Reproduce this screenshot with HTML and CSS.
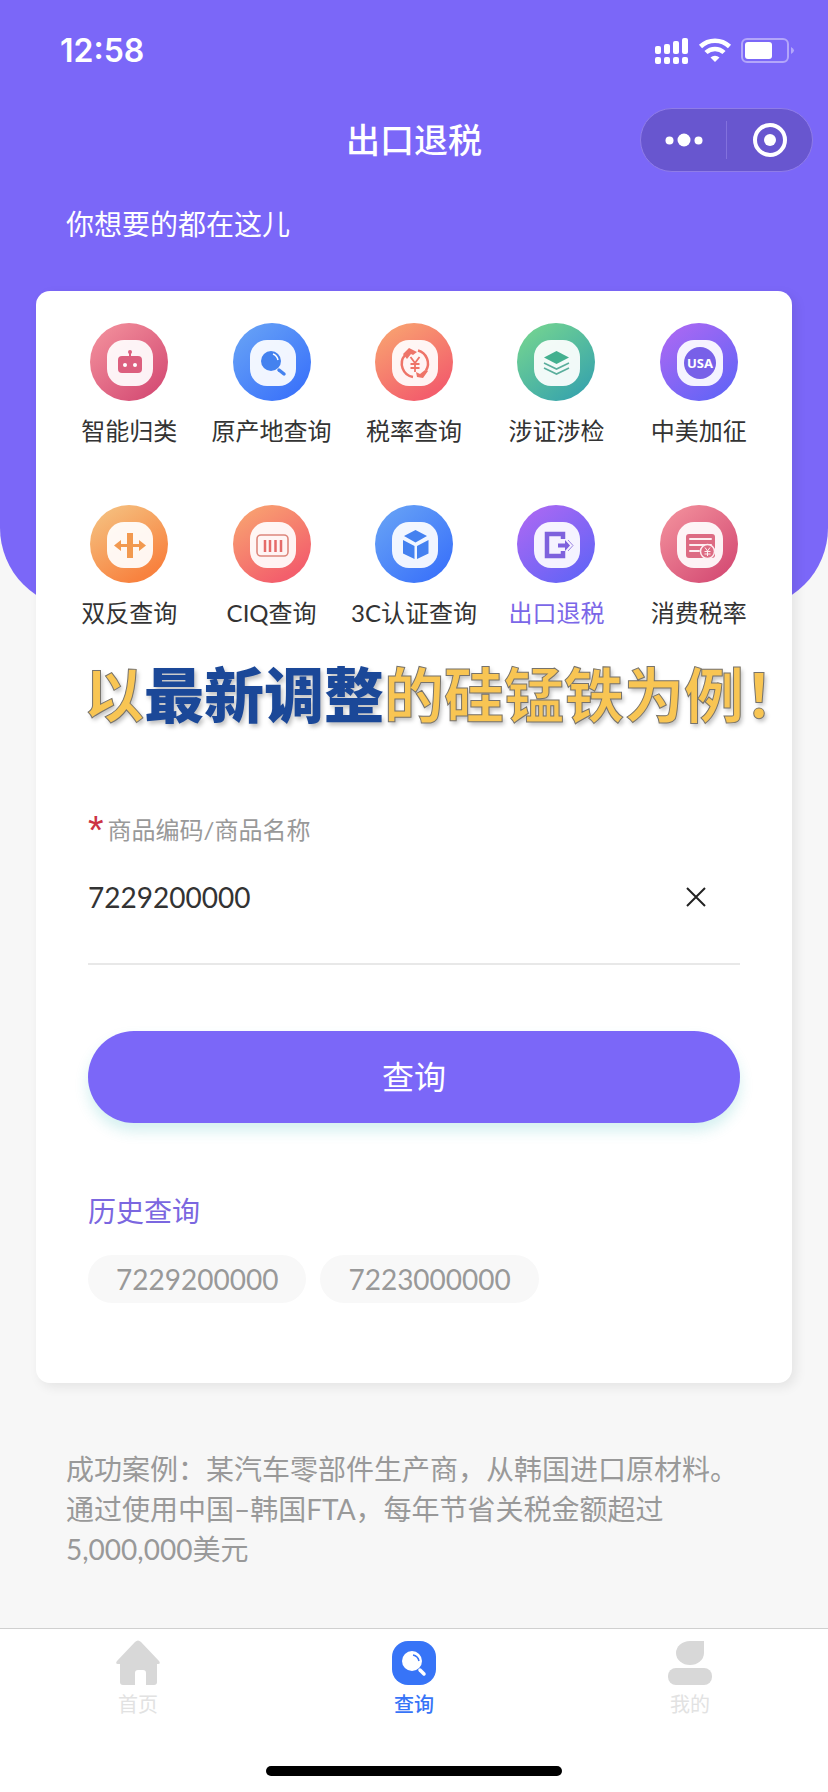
FILE: index.html
```html
<!doctype html>
<html lang="zh-CN">
<head>
	<meta charset="UTF-8">
	<meta name="viewport" content="width=device-width, initial-scale=1">
	<title>出口退税</title>
	<link rel="stylesheet" href="styles.css">
</head>
<body>
<!-- 公用渐变色 -->
<svg class="defs" width="0" height="0" aria-hidden="true">
	<defs>
		<linearGradient id="pink" x1="0.1" y1="0.1" x2="0.8" y2="0.9"><stop offset="0" stop-color="#f18d9a"/><stop offset="1" stop-color="#d64f76"/></linearGradient>
		<linearGradient id="blue" x1="0.1" y1="0.1" x2="0.8" y2="0.9"><stop offset="0" stop-color="#65a0f6"/><stop offset="1" stop-color="#3c74fa"/></linearGradient>
		<linearGradient id="red" x1="0.2" y1="0.1" x2="0.7" y2="0.9"><stop offset="0" stop-color="#f89d70"/><stop offset="1" stop-color="#f35f6c"/></linearGradient>
		<linearGradient id="green" x1="0.2" y1="0.1" x2="0.8" y2="0.9"><stop offset="0" stop-color="#6fd093"/><stop offset="1" stop-color="#3aa6ab"/></linearGradient>
		<linearGradient id="violet" x1="0.2" y1="0.1" x2="0.8" y2="0.9"><stop offset="0" stop-color="#a568f3"/><stop offset="1" stop-color="#6664f6"/></linearGradient>
		<linearGradient id="orange" x1="0.2" y1="0.1" x2="0.7" y2="0.9"><stop offset="0" stop-color="#f5bb7a"/><stop offset="1" stop-color="#f8823f"/></linearGradient>
	</defs>
</svg>

<div class="page">
	<header class="hero">
		<div class="status">
			<span class="time">12:58</span>
			<svg width="142" height="28" viewBox="0 0 142 28" fill="#fff" aria-hidden="true">
				<rect x="1" y="10" width="6" height="8" rx="2"/><rect x="10" y="8" width="6" height="10" rx="2"/><rect x="19" y="5" width="6" height="13" rx="2"/><rect x="28" y="2" width="6" height="16" rx="2"/>
				<rect x="1" y="21" width="6" height="7" rx="2"/><rect x="10" y="21" width="6" height="7" rx="2"/><rect x="19" y="21" width="6" height="7" rx="2"/><rect x="28" y="21" width="6" height="7" rx="2"/>
				<g fill="none" stroke="#fff" stroke-width="4.5"><path d="M46.500 10.500a21 21 0 0 1 29 0"/><path d="M52 16.500a13 13 0 0 1 18 0"/></g>
				<path d="M56.500 21.500a7 7 0 0 1 9 0L61 26z"/>
				<rect x="88" y="3" width="46" height="23" rx="5" fill="none" stroke="#b3a6fa" stroke-width="2"/>
				<rect x="91" y="6" width="27" height="17" rx="3"/>
				<path d="M137 11q6 3.500 0 7z" fill="#b3a6fa"/>
			</svg>
		</div>
		<div class="nav">
			<h1>出口退税</h1>
			<div class="capsule">
				<button type="button" aria-label="更多">
					<svg width="40" height="16" viewBox="0 0 40 16" fill="#fff"><circle cx="5.500" cy="8.500" r="4"/><circle cx="20" cy="8" r="6.500"/><circle cx="34.500" cy="8.500" r="4"/></svg>
				</button>
				<button type="button" aria-label="关闭">
					<svg width="36" height="36" viewBox="0 0 36 36" fill="#fff"><circle cx="18" cy="18" r="15" fill="none" stroke="#fff" stroke-width="4"/><circle cx="18" cy="18" r="6"/></svg>
				</button>
			</div>
		</div>
		<p class="slogan">你想要的都在这儿</p>
	</header>

	<main class="card">
		<nav class="menu">
			<a href="#">
				<svg viewBox="0 0 78 78"><circle cx="39" cy="39" r="39" fill="url(#pink)"/><rect class="tile" x="17" y="17" width="46" height="46" rx="17"/>
					<g fill="#dc5f7e"><rect x="28" y="33" width="24" height="17" rx="4"/><rect x="39" y="28" width="2" height="6"/><circle cx="40" cy="29" r="2"/></g><circle cx="35" cy="42" r="2" fill="#fff"/><circle cx="45" cy="42" r="2" fill="#fff"/></svg>
				<span>智能归类</span>
			</a>
			<a href="#">
				<svg viewBox="0 0 78 78"><circle cx="39" cy="39" r="39" fill="url(#blue)"/><rect class="tile" x="17" y="17" width="46" height="46" rx="17"/>
					<circle cx="38" cy="38" r="10" fill="#4482ef"/><path d="M40 31q4 1.500 5 6" fill="none" stroke="#fff" stroke-width="1.500"/><path d="M46 47l5 4" stroke="#4482ef" stroke-width="3.500" stroke-linecap="round"/></svg>
				<span>原产地查询</span>
			</a>
			<a href="#">
				<svg viewBox="0 0 78 78"><circle cx="39" cy="39" r="39" fill="url(#red)"/><rect class="tile" x="17" y="17" width="46" height="46" rx="17"/>
					<g fill="none" stroke="#ee7468" stroke-width="2.500"><path d="M38 54A13.500 13.500 0 0 1 30 32"/><path d="M43 27.500a13.500 13.500 0 0 1 8 20"/></g>
					<path d="M28 31l6-6 8 4-4 3-2-1-4 5zM41 49l4 2 5-4 3 1-5 7-6-1z" fill="#ee7468"/>
					<path d="M35.500 34l4.500 6 4.500-6M40 40v9M35.500 41h9M35.500 45h9" fill="none" stroke="#ee7468" stroke-width="1.800"/></svg>
				<span>税率查询</span>
			</a>
			<a href="#">
				<svg viewBox="0 0 78 78"><circle cx="39" cy="39" r="39" fill="url(#green)"/><rect class="tile" x="17" y="17" width="46" height="46" rx="17"/>
					<path d="M39.500 28L52 34.500 39.500 41 27 34.500z" fill="#43b08f"/><path d="M27 40l12.500 6L52 40M27 45l12.500 6L52 45" fill="none" stroke="#5aae9c" stroke-width="1.600"/></svg>
				<span>涉证涉检</span>
			</a>
			<a href="#">
				<svg viewBox="0 0 78 78"><circle cx="39" cy="39" r="39" fill="url(#violet)"/><rect class="tile" x="17" y="17" width="46" height="46" rx="17"/>
					<circle cx="40" cy="40" r="16" fill="#7860e8"/><text class="usa" x="40" y="45" text-anchor="middle">USA</text></svg>
				<span>中美加征</span>
			</a>
			<a href="#">
				<svg viewBox="0 0 78 78"><circle cx="39" cy="39" r="39" fill="url(#orange)"/><rect class="tile" x="17" y="17" width="46" height="46" rx="17"/>
					<path d="M37 28h6v11h6v-4l7 5.500-7 5.500v-4h-6v11h-6V42h-6v4l-7-5.500 7-5.500v4h6z" fill="#f2994f"/></svg>
				<span>双反查询</span>
			</a>
			<a href="#">
				<svg viewBox="0 0 78 78"><circle cx="39" cy="39" r="39" fill="url(#red)"/><rect class="tile" x="17" y="17" width="46" height="46" rx="17"/>
					<rect x="24" y="30" width="31" height="21" rx="4" fill="none" stroke="#dd877c" stroke-width="1.600"/><path d="M32 35v12M37 35v12M42.500 35v12M48 35v12" stroke="#e56b69" stroke-width="2.500"/></svg>
				<span>CIQ查询</span>
			</a>
			<a href="#">
				<svg viewBox="0 0 78 78"><circle cx="39" cy="39" r="39" fill="url(#blue)"/><rect class="tile" x="17" y="17" width="46" height="46" rx="17"/>
					<path d="M40.500 25L52 31l-11.500 6.500L29 31zM28 35l11.500 6v13L28 48.500zM53.500 35L42 41v13l11.500-5.500z" fill="#4481f0"/></svg>
				<span>3C认证查询</span>
			</a>
			<a href="#" class="active">
				<svg viewBox="0 0 78 78"><circle cx="39" cy="39" r="39" fill="url(#violet)"/><rect class="tile" x="17" y="17" width="46" height="46" rx="17"/>
					<path d="M46 34v-5H30v22h16v-5" fill="none" stroke="#7e62dd" stroke-width="4.500"/><path d="M41 38.500h7V35l5 5.500-5 5.500v-3.500h-7z" fill="#7e62dd"/><path d="M51 35l5 5.500-5 5.500" fill="none" stroke="#9a83e2" stroke-width="1"/></svg>
				<span>出口退税</span>
			</a>
			<a href="#">
				<svg viewBox="0 0 78 78"><circle cx="39" cy="39" r="39" fill="url(#pink)"/><rect class="tile" x="17" y="17" width="46" height="46" rx="17"/>
					<rect x="26" y="29" width="29" height="24" rx="3" fill="#dd6b83"/><path d="M30 34h21M30 40h21M30 46h9" stroke="#fdeef1" stroke-width="2" stroke-linecap="round"/>
					<circle cx="47.500" cy="46.500" r="7" fill="#dd6b83" stroke="#fdeef1" stroke-width="1.500"/><path d="M45 42.500l2.500 3.500 2.500-3.500M47.500 46v5M44.500 46.500h6M44.500 49h6" fill="none" stroke="#fdeef1"/></svg>
				<span>消费税率</span>
			</a>
		</nav>

		<p class="banner">以<b>最新调整</b>的硅锰铁为例！</p>

		<form class="query">
			<label for="code"><em>*</em>商品编码/商品名称</label>
			<div class="field">
				<input type="text" id="code" name="code" value="7229200000">
				<button type="reset" class="clear" aria-label="清空">
					<svg width="20" height="20" viewBox="0 0 20 20"><path d="M1 1l18 18M19 1L1 19" stroke="#222" stroke-width="2"/></svg>
				</button>
			</div>
			<button type="submit" class="submit">查询</button>
		</form>

		<section class="history">
			<h2>历史查询</h2>
			<div class="tags">
				<button type="button">7229200000</button>
				<button type="button">7223000000</button>
			</div>
		</section>
	</main>

	<p class="case">成功案例：某汽车零部件生产商，从韩国进口原材料。通过使用中国–韩国FTA，每年节省关税金额超过5,000,000美元</p>

	<footer class="tabbar">
		<nav class="tabs">
			<a href="#">
				<svg viewBox="0 0 46 46"><path d="M20 2q3-3 6 0l18 19q2 3-1 3h-1v18q0 3-3 3h-8V33q0-3-3-3h-5q-3 0-3 3v12H8q-3 0-3-3V24H3q-3 0-1-3z" fill="#d8d8d8"/></svg>
				<span>首页</span>
			</a>
			<a href="#" class="active">
				<svg viewBox="0 0 46 46"><rect x="1" y="1" width="44" height="44" rx="16" fill="#3774f7"/><circle cx="21" cy="21" r="10" fill="#fff"/><path d="M22 15q5 1 6 6" fill="none" stroke="#3774f7" stroke-width="1.500"/><path d="M29 30l4 4" stroke="#fff" stroke-width="3.500" stroke-linecap="round"/></svg>
				<span>查询</span>
			</a>
			<a href="#">
				<svg viewBox="0 0 46 46"><path d="M23 1h14v12a14 12 0 1 1-14-12z" fill="#d8d8d8"/><rect x="1" y="28" width="44" height="17" rx="8" fill="#d8d8d8"/></svg>
				<span>我的</span>
			</a>
		</nav>
		<div class="home-bar"></div>
	</footer>
</div>
</body>
</html>
```

FILE: styles.css
```css
*{
	box-sizing: border-box;
}
body{
	margin: 0;
	background: #f7f7f7;
	color: #333;
	font-family: Lato, "Noto Sans CJK SC", sans-serif;
	font-size: 24px;
}
h1, h2, p{
	margin: 0;
	font-weight: 400;
}
a{
	color: inherit;
	text-decoration: none;
}
button{
	padding: 0;
	border: 0;
	background: none;
	color: inherit;
	font: inherit;
	cursor: pointer;
}
svg{
	display: block;
}
.defs{
	position: absolute;
}
.page{
	display: flex;
	flex-direction: column;
	min-height: 100vh;
}

/* 顶部 */
.hero{
	padding-bottom: 364px;
	border-radius: 0 0 80px 80px;
	background: #7b67f8;
	color: #fff;
}
.status{
	display: flex;
	justify-content: space-between;
	align-items: center;
	height: 100px;
	padding: 0 32px 0 60px;
}
.time{
	font-family: Inter, sans-serif;
	font-size: 32px;
	font-weight: 600;
}
.nav{
	display: grid;
	grid-template-columns: 1fr auto 1fr;
	align-items: center;
	height: 80px;
	padding: 0 15px;
}
.nav h1{
	grid-column: 2;
	font-size: 34px;
	font-weight: 500;
	line-height: 48px;
}
.capsule{
	display: flex;
	justify-self: end;
	align-items: center;
	width: 173px;
	height: 64px;
	border: 1px solid #8f7ce8;
	border-radius: 32px;
	background: #6856cf;
}
.capsule button{
	display: flex;
	flex: 1;
	justify-content: center;
	align-items: center;
	height: 38px;
}
.capsule button + button{
	border-left: 1px solid #8271dd;
}
.slogan{
	padding: 24px 66px 0;
	font-size: 28px;
	line-height: 40px;
}

/* 主卡片 */
.card{
	margin: -317px 36px 0;
	padding: 32px 0 80px;
	border-radius: 14px;
	background: #fff;
	box-shadow: 4px 4px 12px rgba(0, 0, 0, .08);
}
.menu{
	display: grid;
	grid-template-columns: repeat(5, 1fr);
	row-gap: 56px;
	padding: 0 22px;
}
.menu a{
	display: flex;
	flex-direction: column;
	align-items: center;
	gap: 12px;
	line-height: 36px;
	white-space: nowrap;
}
.menu svg{
	width: 78px;
	height: 78px;
}
.menu .active{
	color: #7b67e8;
}
.tile{
	fill: #fff;
	fill-opacity: .92;
}
.usa{
	fill: #fff;
	font-family: "Noto Sans", sans-serif;
	font-size: 13px;
	font-weight: 700;
}
.banner{
	padding-left: 48px;
	margin-top: 22px;
	color: #f8c553;
	font-size: 60px;
	font-weight: 700;
	line-height: 84px;
	white-space: nowrap;
	-webkit-text-stroke: 1px #77736c;
	text-shadow: 2px 3px 4px rgba(0, 0, 0, .25);
}
.banner b{
	color: #1b4898;
	-webkit-text-stroke: 0;
}

/* 查询表单 */
.query{
	padding: 0 52px;
	margin-top: 75px;
}
.query label{
	display: flex;
	align-items: center;
	gap: 4px;
	color: #999;
	line-height: 36px;
}
.query em{
	color: #cc3344;
	font-family: "Liberation Sans", sans-serif;
	font-size: 40px;
	font-style: normal;
}
.field{
	display: flex;
	align-items: center;
	height: 117px;
	padding: 0 34px 18px 0;
	border-bottom: 2px solid #e8e8e8;
}
.field input{
	flex: 1;
	min-width: 0;
	height: 60px;
	padding: 0;
	border: 0;
	outline: 0;
	background: none;
	color: #333;
	font: inherit;
	font-size: 28px;
}
.clear{
	padding: 10px 0;
}
.submit{
	display: block;
	width: 100%;
	height: 92px;
	padding-bottom: 4px;
	margin-top: 66px;
	border-radius: 46px;
	background: #7b67f8;
	box-shadow: 0 8px 14px rgba(40, 180, 180, .2);
	color: #fff;
	font-size: 32px;
}
.history{
	padding: 0 52px;
	margin-top: 68px;
}
.history h2{
	color: #7b67e0;
	font-size: 28px;
	line-height: 40px;
}
.tags{
	display: flex;
	flex-wrap: wrap;
	gap: 14px;
	margin-top: 24px;
}
.tags button{
	height: 48px;
	padding: 0 28px;
	border-radius: 24px;
	background: #f8f8f8;
	color: #999;
	font-size: 28px;
}
.case{
	padding: 66px 66px 58px;
	color: #999;
	font-size: 28px;
	line-height: 40px;
}

/* 底部导航 */
.tabbar{
	margin-top: auto;
	padding-bottom: 16px;
	border-top: 1px solid #d0d0d0;
	background: #fff;
}
.tabs{
	display: grid;
	grid-template-columns: repeat(3, 1fr);
	padding-top: 11px;
}
.tabs a{
	display: flex;
	flex-direction: column;
	align-items: center;
	gap: 4px;
	color: #e2e2e2;
	font-size: 20px;
	line-height: 28px;
}
.tabs svg{
	width: 46px;
	height: 46px;
}
.tabs .active{
	color: #3774f7;
	font-weight: 500;
}
.home-bar{
	width: 296px;
	height: 10px;
	margin: 48px auto 0;
	border-radius: 5px;
	background: #000;
}
```
